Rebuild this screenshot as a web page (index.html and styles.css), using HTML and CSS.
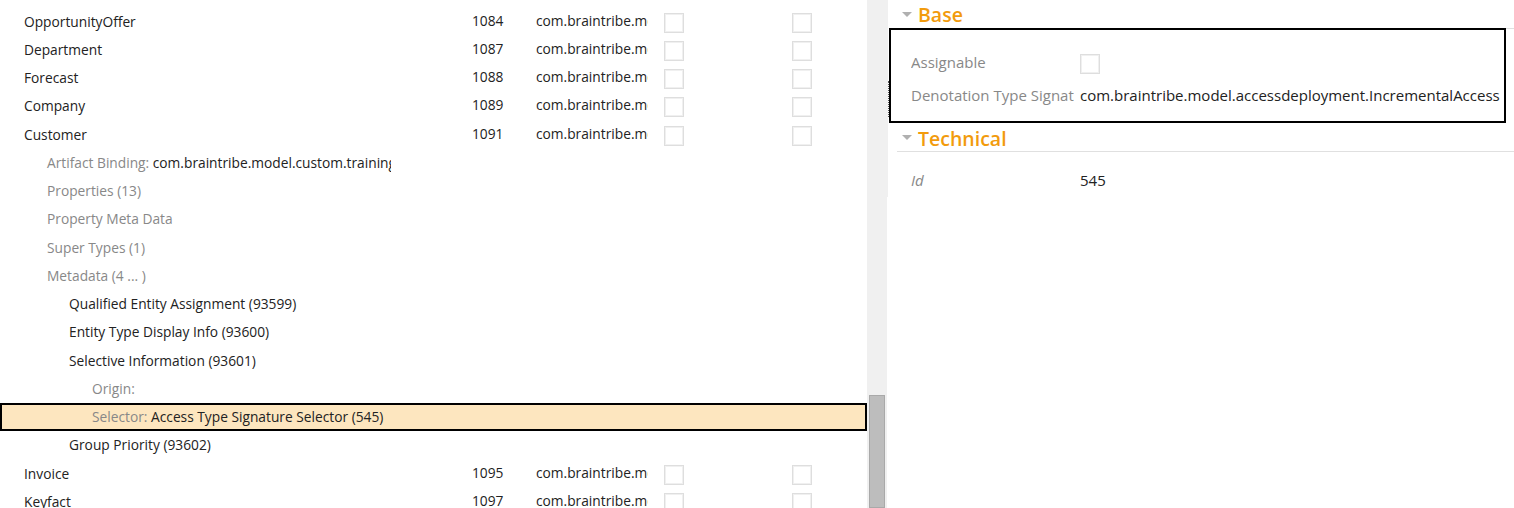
FILE: index.html
```html
<!DOCTYPE html>
<html>
<head>
<meta charset="utf-8">
<link rel="stylesheet" href="styles.css">
</head>
<body>
<div class="app">
  <div class="tree">
    <div class="row"><div class="name l0">OpportunityOffer</div><div class="num">1084</div><div class="pkg"><span>com.braintribe.model.custom.training</span></div><div class="cbcell"><span class="cb"></span></div><div class="cbcell"><span class="cb"></span></div></div>
    <div class="row"><div class="name l0">Department</div><div class="num">1087</div><div class="pkg"><span>com.braintribe.model.custom.training</span></div><div class="cbcell"><span class="cb"></span></div><div class="cbcell"><span class="cb"></span></div></div>
    <div class="row"><div class="name l0">Forecast</div><div class="num">1088</div><div class="pkg"><span>com.braintribe.model.custom.training</span></div><div class="cbcell"><span class="cb"></span></div><div class="cbcell"><span class="cb"></span></div></div>
    <div class="row"><div class="name l0">Company</div><div class="num">1089</div><div class="pkg"><span>com.braintribe.model.custom.training</span></div><div class="cbcell"><span class="cb"></span></div><div class="cbcell"><span class="cb"></span></div></div>
    <div class="row"><div class="name l0">Customer</div><div class="num">1091</div><div class="pkg"><span>com.braintribe.model.custom.training</span></div><div class="cbcell"><span class="cb"></span></div><div class="cbcell"><span class="cb"></span></div></div>
    <div class="row"><div class="name l1"><span class="lbl">Artifact Binding: </span>com.braintribe.model.custom.training:CustomTrainingModel</div></div>
    <div class="row"><div class="name l1"><span class="lbl">Properties (13)</span></div></div>
    <div class="row"><div class="name l1"><span class="lbl">Property Meta Data</span></div></div>
    <div class="row"><div class="name l1"><span class="lbl">Super Types (1)</span></div></div>
    <div class="row"><div class="name l1"><span class="lbl">Metadata (4 ... )</span></div></div>
    <div class="row"><div class="name l2">Qualified Entity Assignment (93599)</div></div>
    <div class="row"><div class="name l2">Entity Type Display Info (93600)</div></div>
    <div class="row"><div class="name l2">Selective Information (93601)</div></div>
    <div class="row"><div class="name l3"><span class="lbl">Origin:</span></div></div>
    <div class="row selected"><div class="name l3"><span class="lbl">Selector: </span>Access Type Signature Selector (545)</div></div>
    <div class="row"><div class="name l2">Group Priority (93602)</div></div>
    <div class="row"><div class="name l0">Invoice</div><div class="num">1095</div><div class="pkg"><span>com.braintribe.model.custom.training</span></div><div class="cbcell"><span class="cb"></span></div><div class="cbcell"><span class="cb"></span></div></div>
    <div class="row"><div class="name l0">Keyfact</div><div class="num">1097</div><div class="pkg"><span>com.braintribe.model.custom.training</span></div><div class="cbcell"><span class="cb"></span></div><div class="cbcell"><span class="cb"></span></div></div>
  </div>
  <div class="scrollbar"><div class="thumb"></div></div>
  <div class="props">
    <div class="props-inner">
      <div class="section-head"><span class="tri"></span><span class="title">Base</span></div>
      <div class="focus-box">
        <div class="prow"><div class="plabel">Assignable</div><div class="pval"><span class="cb"></span></div></div>
        <div class="prow"><div class="plabel">Denotation Type Signature</div><div class="pval">com.braintribe.model.accessdeployment.IncrementalAccess</div></div>
      </div>
      <div class="section-head second"><span class="tri"></span><span class="title">Technical</span></div>
      <div class="plist">
        <div class="prow"><div class="plabel italic">Id</div><div class="pval">545</div></div>
      </div>
    </div>
  </div>
</div>
</body>
</html>
```

FILE: styles.css
```css
html, body {
  margin: 0;
  padding: 0;
  background: #fff;
}
body {
  font-family: "Open Sans", "Liberation Sans", sans-serif;
  font-size: 14px;
  color: #222;
  width: 1514px;
  height: 508px;
  overflow: hidden;
}
.app {
  display: flex;
  height: 508px;
}
.tree {
  width: 867px;
  flex: none;
  padding-top: 7px;
  box-sizing: border-box;
  overflow: hidden;
  font-size: 13.75px;
}
.row {
  display: flex;
  align-items: center;
  height: 28.25px;
  box-sizing: border-box;
  white-space: nowrap;
}
.row.selected {
  background: #fde6bf;
  border: 2px solid #000;
}
.name {
  width: 391px;
  flex: none;
  overflow: hidden;
  box-sizing: border-box;
}
.l0 { padding-left: 24px; }
.l1 { padding-left: 47px; }
.l2 { padding-left: 69px; }
.l3 { padding-left: 92px; }
.selected .l3 { padding-left: 90px; }
.lbl { color: #888; }
.num {
  width: 145px;
  flex: none;
  box-sizing: border-box;
  padding-left: 81px;
  margin-top: -2px;
}
.pkg {
  width: 128px;
  flex: none;
  margin-top: -2px;
}
.pkg span {
  display: block;
  width: 112px;
  overflow: hidden;
}
.cbcell {
  width: 128px;
  flex: none;
  display: flex;
  align-items: center;
}
.cb {
  display: inline-block;
  width: 20px;
  height: 20px;
  box-sizing: border-box;
  border: 1px solid #dedede;
  box-shadow: inset 0 0 0 1px #f0f0f0;
  background: #fff;
  margin-top: 3px;
}
.scrollbar {
  width: 20px;
  flex: none;
  background: #f0f0f0;
  display: flex;
  flex-direction: column;
  align-items: center;
}
.thumb {
  margin-top: 395px;
  width: 16px;
  flex: 1;
  background: #bdbdbd;
  border: 1px solid #a9a9a9;
  box-sizing: border-box;
}
.props {
  flex: 1;
  font-size: 15px;
}
.props-inner {
  border-left: 1px solid #f0f0f0;
}
.section-head {
  display: flex;
  align-items: center;
  height: 28px;
  margin-left: 9px;
  border-bottom: 1px solid #e0e0e0;
}
.tri {
  width: 0;
  height: 0;
  border-left: 5px solid transparent;
  border-right: 5px solid transparent;
  border-top: 5px solid #b0b0b0;
  margin-left: 5px;
  margin-right: 6px;
  margin-top: 0;
}
.title {
  color: #f29b0d;
  font-size: 19.5px;
  font-weight: 600;
  line-height: 28px;
  margin-top: 2px;
}
.section-head.second .title {
  margin-top: 3px;
}
.focus-box {
  position: relative;
  margin-left: 1px;
  margin-right: 8px;
  margin-top: -1px;
  border: 2px solid #000;
  padding: 16px 0 10px 20px;
}
.focus-box::before {
  content: "";
  position: absolute;
  left: -3px;
  top: 51px;
  height: 36px;
  border-left: 1px dotted #555;
}
.prow {
  display: flex;
  align-items: center;
  height: 32.5px;
  white-space: nowrap;
}
.plabel {
  width: 163px;
  margin-right: 6px;
  flex: none;
  overflow: hidden;
  color: #888;
}
.plabel.italic {
  font-style: italic;
}
.pval {
  display: flex;
  align-items: center;
}
.plist {
  padding: 12px 0 0 23px;
}
```
